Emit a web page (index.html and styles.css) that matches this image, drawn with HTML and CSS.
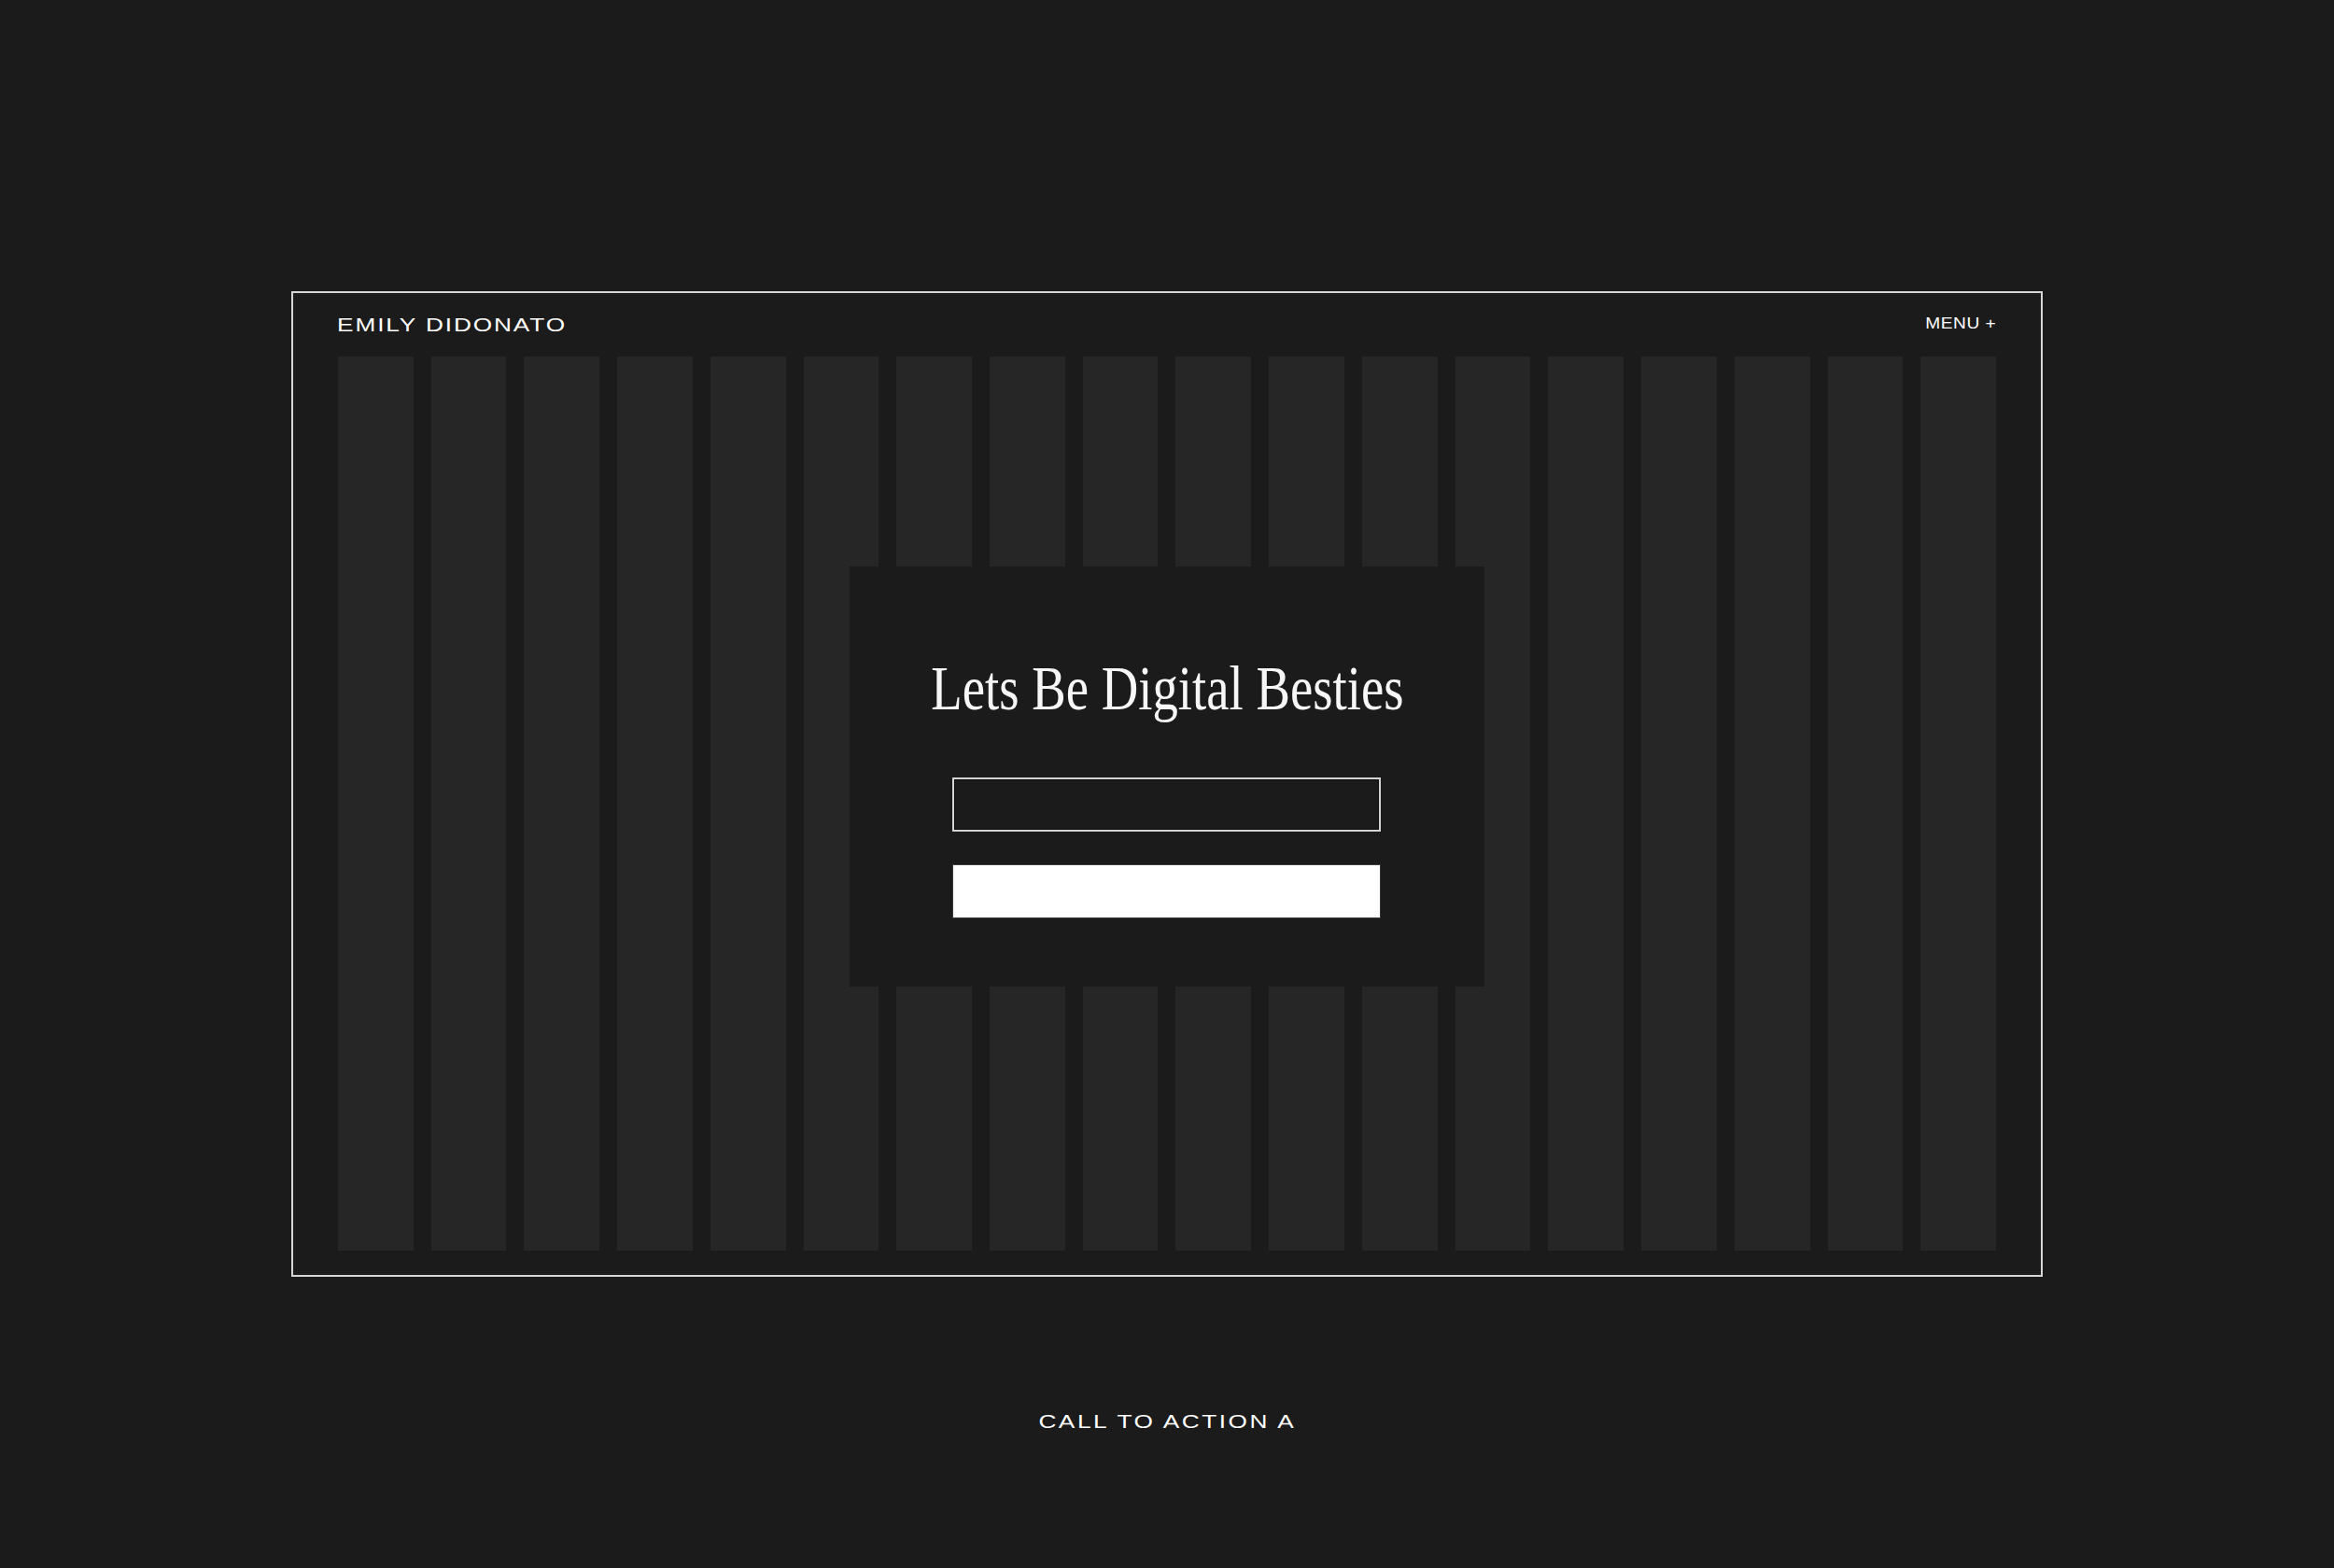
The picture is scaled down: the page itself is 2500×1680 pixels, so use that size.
FILE: index.html
```html
<!DOCTYPE html>
<html lang="en">
<head>
<meta charset="utf-8">
<title>Emily Didonato</title>
<link rel="stylesheet" href="styles.css">
</head>
<body>
<main class="page">
  <section class="frame">
    <header class="topbar">
      <span class="brand"><span class="wide wide-left">EMILY DIDONATO</span></span>
      <span class="menu"><span class="wide wide-right">MENU +</span></span>
    </header>
    <div class="grid-area">
      <div class="columns">
        <div class="col"></div><div class="col"></div><div class="col"></div>
        <div class="col"></div><div class="col"></div><div class="col"></div>
        <div class="col"></div><div class="col"></div><div class="col"></div>
        <div class="col"></div><div class="col"></div><div class="col"></div>
        <div class="col"></div><div class="col"></div><div class="col"></div>
        <div class="col"></div><div class="col"></div><div class="col"></div>
      </div>
      <div class="card">
        <h1 class="title"><span class="condensed">Lets Be Digital Besties</span></h1>
        <div class="field"></div>
        <div class="button"></div>
      </div>
    </div>
  </section>
  <p class="cta"><span class="wide wide-center">CALL TO ACTION A</span></p>
</main>
</body>
</html>
```

FILE: styles.css
```css
html, body {
  margin: 0;
  padding: 0;
  background: #1b1b1b;
}

body {
  font-family: "Liberation Sans", Arial, sans-serif;
  color: #ffffff;
}

.page {
  padding-top: 312px;
  display: flex;
  flex-direction: column;
  align-items: center;
}

.frame {
  box-sizing: border-box;
  width: 1876px;
  height: 1056px;
  border: 2px solid #d6d6d6;
  display: flex;
  flex-direction: column;
}

.topbar {
  height: 68px;
  padding: 0 48px 0 47px;
  display: flex;
  align-items: center;
  justify-content: space-between;
}

.wide {
  display: inline-block;
  transform: scaleX(1.25);
  white-space: nowrap;
}

.wide-left { transform-origin: left center; }
.wide-right { transform-origin: right center; }
.wide-center { transform-origin: center center; }

.brand {
  font-size: 21px;
  letter-spacing: 1.5px;
}

.menu {
  font-size: 16px;
  letter-spacing: 0.4px;
  padding-bottom: 3px;
}

.menu .wide {
  transform: scaleX(1.2);
}

.grid-area {
  position: relative;
  flex: 1;
  padding: 0 48px 26px 48px;
  display: flex;
}

.columns {
  flex: 1;
  display: grid;
  grid-template-columns: repeat(18, 1fr);
  column-gap: 19px;
}

.col {
  background: #262626;
}

.card {
  position: absolute;
  top: 225px;
  left: 50%;
  transform: translateX(-50%);
  width: 680px;
  height: 450px;
  box-sizing: border-box;
  padding-top: 96px;
  background: #1b1b1b;
  display: flex;
  flex-direction: column;
  align-items: center;
}

.title {
  margin: 0;
  font-family: "Liberation Serif", "Times New Roman", serif;
  font-weight: 400;
  font-size: 68px;
  line-height: 68px;
  white-space: nowrap;
  color: #f7f7f7;
}

.condensed {
  display: inline-block;
  transform: scaleX(0.805);
  transform-origin: center center;
}

.field {
  box-sizing: border-box;
  margin: 62px 2px 0 0;
  width: 459px;
  height: 58px;
  border: 2px solid #d4d4d4;
  box-shadow: inset 0 0 0 1px #0d0d0d;
}

.button {
  box-sizing: border-box;
  margin: 35px 2px 0 0;
  width: 459px;
  height: 58px;
  background: #ffffff;
  border: 1px solid #3a3a3a;
}

.cta {
  margin: 143px 0 0 0;
  font-size: 21px;
  letter-spacing: 2px;
  line-height: normal;
}
```
